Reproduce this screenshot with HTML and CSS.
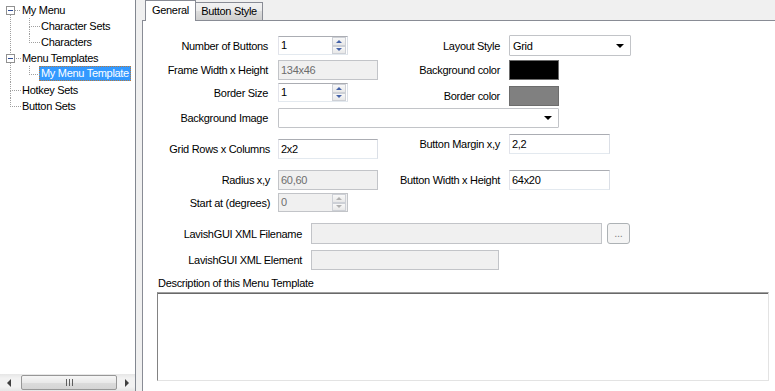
FILE: index.html
```html
<!DOCTYPE html>
<html>
    <head>
        <title>Menu Template</title>
        <link rel="stylesheet" href="styles.css">
    </head>
    <body>
        <div class="window">
            <div class="tree-pane">
                <ul class="tree">
                    <li><span class="box"></span><span class="txt">My Menu</span>
                        <ul>
                            <li><span class="txt">Character Sets</span></li>
                            <li><span class="txt">Characters</span></li>
                        </ul>
                    </li>
                    <li><span class="box"></span><span class="txt">Menu Templates</span>
                        <ul>
                            <li><span class="txt sel">My Menu Template</span></li>
                        </ul>
                    </li>
                    <li><span class="txt">Hotkey Sets</span></li>
                    <li><span class="txt">Button Sets</span></li>
                </ul>
                <div class="hscroll">
                    <span class="arr left"></span>
                    <span class="thumb"></span>
                    <span class="arr right"></span>
                </div>
            </div>
            <div class="splitter"></div>
            <div class="tabs">
                <div class="tabstrip">
                    <div class="tab active">General</div>
                    <div class="tab second">Button Style</div>
                </div>
                <div class="page">
                    <div class="sect top">
                        <div class="col-l">
                            <div class="row">
                                <span class="lbl">Number of Buttons</span>
                                <div class="spin"><span class="val">1</span><span class="arrows"><i class="up"></i><i class="dn"></i></span></div>
                            </div>
                            <div class="row gap5">
                                <span class="lbl">Frame Width x Height</span>
                                <div class="field off short">134x46</div>
                            </div>
                            <div class="row gap3">
                                <span class="lbl">Border Size</span>
                                <div class="spin"><span class="val">1</span><span class="arrows"><i class="up"></i><i class="dn"></i></span></div>
                            </div>
                        </div>
                        <div class="col-r">
                            <div class="row">
                                <span class="lbl">Layout Style</span>
                                <div class="combo layout">Grid</div>
                            </div>
                            <div class="row gap4">
                                <span class="lbl">Background color</span>
                                <div class="swatch black"></div>
                            </div>
                            <div class="row gap6">
                                <span class="lbl">Border color</span>
                                <div class="swatch grey"></div>
                            </div>
                        </div>
                    </div>

                    <div class="sect bgimg">
                        <div class="row">
                            <span class="lbl">Background Image</span>
                            <div class="combo image"></div>
                        </div>
                    </div>

                    <div class="sect lower">
                        <div class="col-l">
                            <div class="row">
                                <span class="lbl">Grid Rows x Columns</span>
                                <div class="field short">2x2</div>
                            </div>
                            <div class="row gap11">
                                <span class="lbl">Radius x,y</span>
                                <div class="field off short">60,60</div>
                            </div>
                            <div class="row gap3">
                                <span class="lbl">Start at (degrees)</span>
                                <div class="spin off"><span class="val">0</span><span class="arrows"><i class="up"></i><i class="dn"></i></span></div>
                            </div>
                        </div>
                        <div class="col-r">
                            <div class="row">
                                <span class="lbl">Button Margin x,y</span>
                                <div class="field med">2,2</div>
                            </div>
                            <div class="row gap16">
                                <span class="lbl">Button Width x Height</span>
                                <div class="field med">64x20</div>
                            </div>
                        </div>
                    </div>

                    <div class="wide">
                        <div class="row">
                            <span class="lbl">LavishGUI XML Filename</span>
                            <div class="field off long"></div>
                            <div class="dots">...</div>
                        </div>
                        <div class="row gap6">
                            <span class="lbl">LavishGUI XML Element</span>
                            <div class="field off elem"></div>
                        </div>
                    </div>

                    <div class="desc-lbl">Description of this Menu Template</div>
                    <div class="desc"></div>
                </div>
            </div>
        </div>
    </body>
</html>
```

FILE: styles.css
```css
body{
    margin:0;
    background:#f0f0f0;
    font-family:"Liberation Sans", Arial, sans-serif;
    font-size:11px;
    letter-spacing:-0.3px;
    color:#000;
    overflow:hidden;
}
.window{
    display:flex;
    width:775px;
    height:391px;
}

/* tree */
.tree-pane{
    width:135px;
    flex:none;
    border-right:1px solid #828790;
    background:#fff;
    display:flex;
    flex-direction:column;
}
.tree{
    list-style:none;
    margin:0;
    padding:2px 0 0;
    flex:1;
}
.tree ul{
    list-style:none;
    margin:0;
    padding:0;
}
.tree li{
    position:relative;
    padding-left:22px;
    line-height:16px;
}
.tree li li{
    padding-left:19px;
}
.tree li::before{
    content:"";
    position:absolute;
    left:10px;
    top:0;
    width:10px;
    height:8px;
    border-left:1px dotted #a0a0a0;
    border-bottom:1px dotted #a0a0a0;
}
.tree > li:first-child::before{
    border-left:none;
}
.tree li::after{
    content:"";
    position:absolute;
    left:10px;
    top:8px;
    bottom:0;
    border-left:1px dotted #a0a0a0;
}
.tree li li::before,
.tree li li::after{
    left:7px;
}
.tree li:last-child::after{
    display:none;
}
.box{
    position:absolute;
    left:6px;
    top:4px;
    width:9px;
    height:9px;
    box-sizing:border-box;
    border:1px solid #919191;
    background:#fff;
    z-index:1;
    display:flex;
    align-items:center;
    justify-content:center;
}
.box::after{
    content:"";
    width:5px;
    height:1px;
    background:#2c4a94;
}
.txt{
    display:inline-block;
    vertical-align:top;
    height:16px;
    padding:0 2px;
    margin-left:-2px;
    white-space:nowrap;
}
.txt.sel{
    height:15px;
    line-height:15px;
    background:#3399ff;
    color:#fff;
    outline:1px dotted #b77a3c;
    outline-offset:-1px;
}
.hscroll{
    height:17px;
    flex:none;
    display:flex;
    align-items:center;
    background:linear-gradient(#e6e6e6, #f2f2f2 25%, #f2f2f2 75%, #e6e6e6);
}
.arr{
    width:17px;
    height:17px;
    display:flex;
    align-items:center;
    justify-content:center;
}
.arr::after{
    content:"";
    border-top:4px solid transparent;
    border-bottom:4px solid transparent;
}
.arr.left::after{
    border-right:4px solid #404040;
}
.arr.right{
    margin-left:auto;
}
.arr.right::after{
    border-left:4px solid #404040;
}
.thumb{
    margin-left:4px;
    width:96px;
    height:15px;
    box-sizing:border-box;
    border:1px solid #979797;
    border-radius:2px;
    background:linear-gradient(#f6f6f6, #e9e9e9 50%, #dcdcdc 50%, #d4d4d4);
    display:flex;
    align-items:center;
    justify-content:center;
}
.thumb::after{
    content:"";
    width:7px;
    height:7px;
    background:repeating-linear-gradient(90deg, #5f5f5f 0 1px, transparent 1px 3px);
}

.splitter{
    width:6px;
    flex:none;
}

/* tabs */
.tabs{
    flex:1;
    min-width:0;
    display:flex;
    flex-direction:column;
}
.tabstrip{
    height:20px;
    flex:none;
    display:flex;
    align-items:flex-end;
    padding-left:3px;
}
.tab{
    box-sizing:border-box;
    height:18px;
    line-height:16px;
    border:1px solid #898c95;
    border-bottom:none;
    background:linear-gradient(#f2f2f2, #ebebeb 50%, #dddddd 50%, #cfcfcf);
    text-align:center;
}
.tab.active{
    width:51px;
    height:21px;
    line-height:18px;
    margin-bottom:-1px;
    background:#fff;
    position:relative;
    z-index:1;
}
.tab.second{
    width:68px;
    margin-left:-1px;
}
.page{
    flex:1;
    background:#fff;
    border-top:1px solid #898c95;
    border-left:1px solid #898c95;
    padding-top:14px;
}

/* form */
.sect{
    display:flex;
}
.col-l{
    width:242px;
    flex:none;
}
.top .col-l{
    padding-top:1px;
}
.row{
    display:flex;
    align-items:center;
}
.lbl{
    flex:none;
    text-align:right;
    white-space:nowrap;
}
.col-l .lbl,
.bgimg .lbl{
    width:125px;
    margin-right:10px;
}
.lower .col-l .lbl{
    width:127px;
    margin-right:8px;
}
.col-r .lbl{
    width:115px;
    margin-right:9px;
}
.wide .lbl{
    width:159px;
    margin-right:9px;
}
.gap3{ margin-top:3px; }
.gap4{ margin-top:4px; }
.gap5{ margin-top:5px; }
.gap6{ margin-top:6px; }
.gap11{ margin-top:11px; }
.gap16{ margin-top:16px; }

.bgimg{
    margin-top:2px;
}
.lower{
    margin-top:6px;
}
.lower .col-l{
    padding-top:5px;
}
.wide{
    margin-top:11px;
}

.field{
    box-sizing:border-box;
    height:20px;
    line-height:18px;
    padding:0 2px;
    border:1px solid;
    border-color:#abadb3 #dbdfe6 #e3e9ef #e2e3ea;
    background:#fff;
}
.field.off{
    background:#f0f0f0;
    border-color:#c2c4c8;
    color:#6d6d6d;
}
.short{ width:100px; }
.med{ width:101px; }
.long{ width:291px; height:21px; }
.elem{ width:188px; }

.spin{
    box-sizing:border-box;
    width:70px;
    height:19px;
    display:flex;
    border:1px solid;
    border-color:#abadb3 #dbdfe6 #e3e9ef #e2e3ea;
    background:#fff;
}
.spin .val{
    flex:1;
    padding-left:2px;
    line-height:17px;
}
.spin.off{
    background:#f0f0f0;
    border-color:#c2c4c8;
    color:#6d6d6d;
}
.arrows{
    width:14px;
    display:flex;
    flex-direction:column;
    margin-right:1px;
}
.arrows i{
    flex:1;
    box-sizing:border-box;
    border:1px solid #cdd0d6;
    background:linear-gradient(#f8f8f8, #e8e8e8);
    display:flex;
    align-items:center;
    justify-content:center;
}
.arrows i::after{
    content:"";
    border-left:3px solid transparent;
    border-right:3px solid transparent;
}
.arrows .up::after{
    border-bottom:3px solid #4462a8;
}
.arrows .dn::after{
    border-top:3px solid #4462a8;
}
.spin.off .up::after{
    border-bottom-color:#b0b0b0;
}
.spin.off .dn::after{
    border-top-color:#b0b0b0;
}

.combo{
    box-sizing:border-box;
    height:21px;
    display:flex;
    align-items:center;
    padding-left:3px;
    border:1px solid #c2c4c8;
    border-radius:1px;
    background:#fff;
}
.combo::after{
    content:"";
    margin-left:auto;
    margin-right:6px;
    border-left:4px solid transparent;
    border-right:4px solid transparent;
    border-top:4px solid #000;
}
.combo.layout{
    width:122px;
}
.combo.image{
    width:281px;
    height:20px;
}

.swatch{
    box-sizing:border-box;
    width:50px;
    height:20px;
    border:1px solid #6d6d6d;
}
.black{ background:#000; }
.grey{ background:#808080; }

.dots{
    box-sizing:border-box;
    width:23px;
    height:21px;
    margin-left:5px;
    border:1px solid #adb2b5;
    border-radius:3px;
    background:#f4f4f4;
    color:#838383;
    text-align:center;
    line-height:19px;
}

.desc-lbl{
    margin:6px 0 0 15px;
    line-height:14px;
}
.desc{
    box-sizing:border-box;
    width:612px;
    height:89px;
    margin:2px 0 0 14px;
    border:1px solid;
    border-color:#a0a0a0 #e3e3e3 #e3e3e3 #828282;
    box-shadow:inset 0 1px 0 #696969;
    background:#fff;
}
```
